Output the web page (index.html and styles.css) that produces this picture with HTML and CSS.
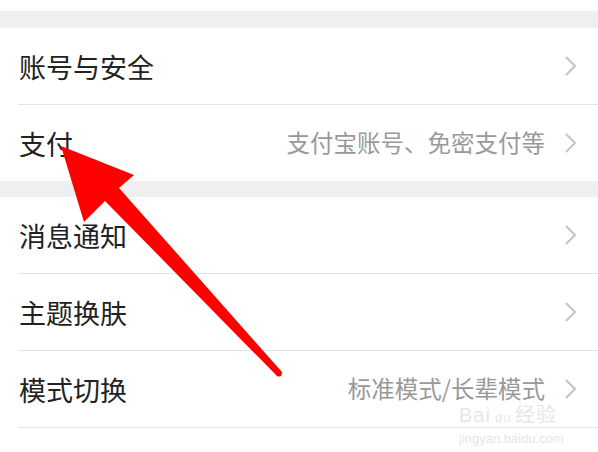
FILE: index.html
```html
<!DOCTYPE html>
<html lang="zh-CN">
<head>
  <meta charset="UTF-8">
  <title>设置</title>
  <link rel="stylesheet" href="styles.css">
</head>
<body>
  <div class="screen">
    <div class="stub"></div>
    <div class="gap first"></div>

    <div class="group">
      <div class="row">
        <span class="label">账号与安全</span>
        <svg class="chevron" width="12" height="20" viewBox="0 0 12 20"><polyline points="1.5,1.5 10,10 1.5,18.5"/></svg>
      </div>
      <div class="row">
        <span class="label">支付</span>
        <span class="value">支付宝账号、免密支付等</span>
        <svg class="chevron" width="12" height="20" viewBox="0 0 12 20"><polyline points="1.5,1.5 10,10 1.5,18.5"/></svg>
      </div>
    </div>

    <div class="gap"></div>

    <div class="group">
      <div class="row">
        <span class="label">消息通知</span>
        <svg class="chevron" width="12" height="20" viewBox="0 0 12 20"><polyline points="1.5,1.5 10,10 1.5,18.5"/></svg>
      </div>
      <div class="row">
        <span class="label">主题换肤</span>
        <svg class="chevron" width="12" height="20" viewBox="0 0 12 20"><polyline points="1.5,1.5 10,10 1.5,18.5"/></svg>
      </div>
      <div class="row">
        <span class="label">模式切换</span>
        <span class="value">标准模式/长辈模式</span>
        <svg class="chevron" width="12" height="20" viewBox="0 0 12 20"><polyline points="1.5,1.5 10,10 1.5,18.5"/></svg>
      </div>
      <div class="row"></div>
    </div>

    <!-- watermark -->
    <div class="watermark">
      <div class="wm-logo">Bai<span class="wm-paw">du</span>经验</div>
      <div class="wm-url">jingyan.baidu.com</div>
    </div>

    <!-- red arrow pointing at 支付 -->
    <svg class="arrow" width="598" height="452" viewBox="0 0 598 452">
      <path d="M61 146 L134 175 L119 188 L282 372 Q282 378 277 376 L105 201 L84 222 Z" fill="#ff0000"/>
    </svg>
  </div>
</body>
</html>
```

FILE: styles.css
```css
/* page */
body {
  margin: 0;
  background: #fff;
  font-family: "Noto Sans CJK SC", "Noto Sans", sans-serif;
}

.screen {
  position: relative;
  width: 598px;
  height: 452px;
  overflow: hidden;
  background: #fff;
}

.stub {
  height: 11px;
}

.gap {
  height: 16px;
  background: #efefef;
}

.gap.first {
  height: 17px;
}

/* list rows */
.group {
  padding-left: 18px;
}

.row {
  display: flex;
  align-items: center;
  height: 76px;
  padding-left: 1px;
  padding-right: 21px;
  border-bottom: 1px solid #e3e3e3;
}

.group .row:last-child {
  border-bottom: none;
}

.label {
  flex: 1;
  font-size: 27px;
  color: #222;
  line-height: 1;
}

.value {
  font-size: 23.5px;
  color: #999;
  margin-right: 20px;
  line-height: 1;
}

.chevron {
  display: block;
  fill: none;
  stroke: #c4c4c4;
  stroke-width: 2;
  stroke-linecap: round;
  stroke-linejoin: round;
}

/* watermark */
.watermark {
  position: absolute;
  left: 459px;
  top: 407px;
  color: #e6e6e6;
  font-family: "Liberation Sans", sans-serif;
}

.wm-logo {
  font-size: 20px;
  line-height: 16px;
  letter-spacing: 1px;
}

.wm-paw {
  font-size: 13px;
  margin: 0 4px;
}

.wm-url {
  font-size: 13px;
  line-height: 15px;
  margin-top: 5px;
}

.arrow {
  position: absolute;
  left: 0;
  top: 0;
}
```
